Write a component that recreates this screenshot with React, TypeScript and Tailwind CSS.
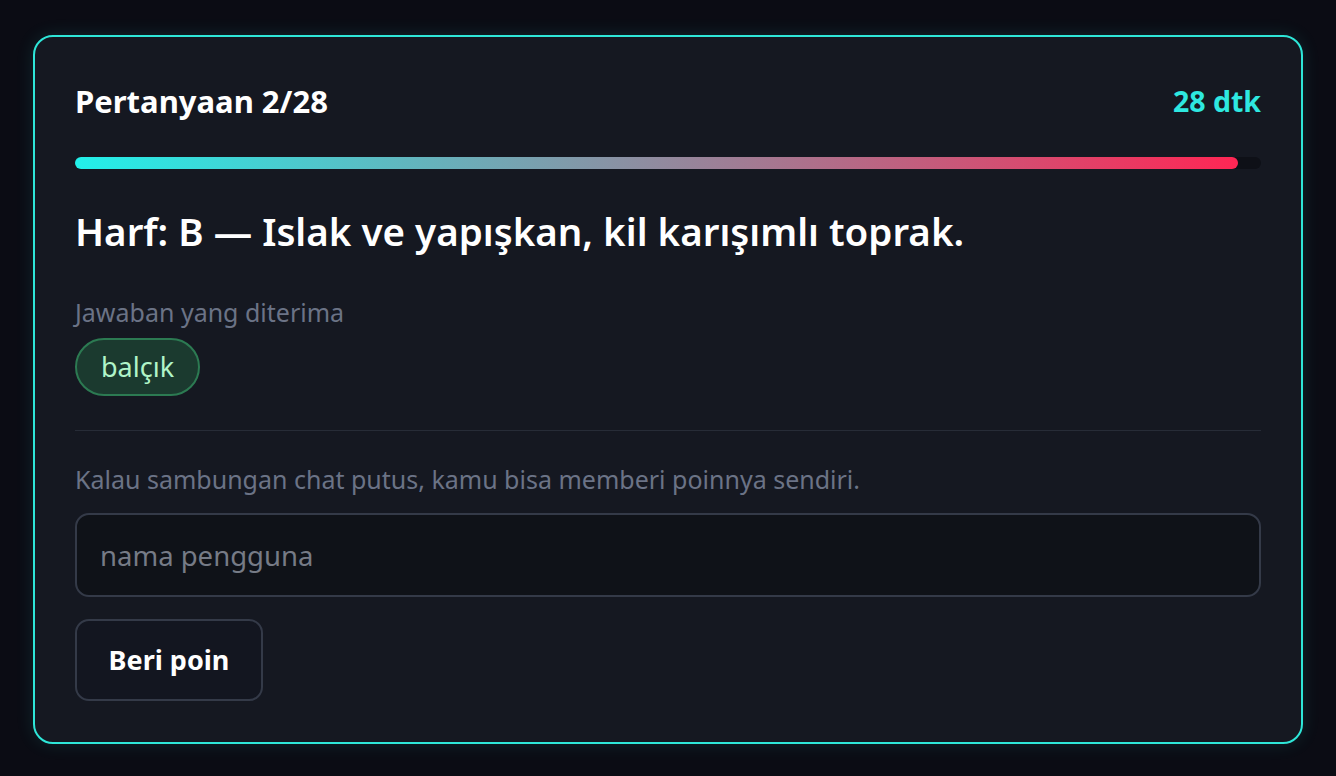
import React from "react";

export default function App() {
  return (
    <div
      className="min-h-screen w-full bg-[#0b0c14] px-[33px] pt-[35px] pb-[33px]"
      style={{ fontFamily: '"Noto Sans", "Open Sans", sans-serif' }}
    >
      <div className="rounded-[20px] border-2 border-[#2ee6d8] bg-[#151821] px-[40px] pt-[46px] pb-[41px] shadow-[0_0_18px_rgba(46,230,216,0.12)]">
        <div className="flex items-center justify-between h-[36px]">
          <div className="text-[31px] font-bold text-white leading-[36px]">Pertanyaan 2/28</div>
          <div className="text-[28.5px] font-bold text-[#2ee8e0] leading-[36px]">28 dtk</div>
        </div>
        <div className="mt-[38px] h-[12px] w-full rounded-full bg-[#0e1017]">
          <div
            className="h-full rounded-full bg-[linear-gradient(to_right,#22f0ea,#ff2654)]"
            style={{ width: "98.1%" }}
          />
        </div>
        <div className="mt-[40px] text-[38.5px] font-semibold leading-[44px] text-white">
          Harf: B — Islak ve yapışkan, kil karışımlı toprak.
        </div>
        <div className="mt-[44px] text-[25px] leading-[30px] text-[#6b7386]">Jawaban yang diterima</div>
        <div className="mt-[11px] flex">
          <span className="inline-flex h-[58px] items-center rounded-full border-2 border-[#2c7a52] bg-[#1b3a2f] px-[24px] text-[27px] text-[#b0f4c8]">
            balçık
          </span>
        </div>
        <div className="mt-[34px] h-px w-full bg-[#272c37]" />
        <div className="mt-[33px] text-[25px] leading-[30px] text-[#6b7386]">
          Kalau sambungan chat putus, kamu bisa memberi poinnya sendiri.
        </div>
        <input
          className="mt-[19px] block h-[84px] w-full rounded-[14px] border-2 border-[#343a48] bg-[#0f1218] px-[23px] text-[27.5px] text-white placeholder:text-[#767b86] outline-none"
          placeholder="nama pengguna"
        />
        <button className="mt-[22px] block h-[82px] w-[188px] rounded-[14px] border-2 border-[#343a48] bg-[#131620] text-[27px] font-bold text-white">
          Beri poin
        </button>
      </div>
    </div>
  );
}
